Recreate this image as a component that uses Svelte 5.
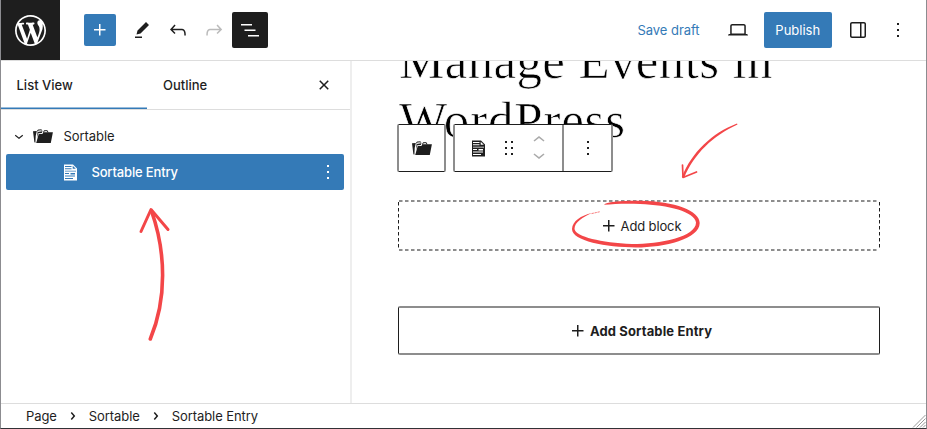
<script>
  const icons = {
    plus: 'M11 12.5V17.5H12.5V12.5H17.5V11H12.5V6H11V11H6V12.5H11Z',
    edit: 'm19 7-3-3-8.5 8.5-1 4 4-1L19 7Zm-7 11.5H5V20h7v-1.5Z',
    undo: 'M18.3 11.7c-.6-.6-1.4-.9-2.3-.9H6.7l2.9-3.3-1.1-1-4.5 5L8.5 16l1-1-2.7-2.7H16c.5 0 .9.2 1.3.5 1 1 1 3.4 1 4.5v.3h1.5v-.2c0-1.5 0-4.3-1.5-5.7z',
    redo: 'M15.6 6.5l-1.1 1 2.9 3.3H8c-.9 0-1.7.3-2.3.9-1.4 1.5-1.4 4.2-1.4 5.6v.2h1.5v-.3c0-1.1 0-3.5 1-4.5.3-.3.7-.5 1.3-.5h9.2L14.5 15l1.1 1.1 4.6-4.6-4.6-5z',
    list: 'M3 6h11v1.5H3V6Zm3.5 5.5h11V13h-11v-1.5ZM21 17H10v1.5h11V17Z',
    desktop: 'M20.5 16h-.7V8c0-1.1-.9-2-2-2H6.2c-1.1 0-2 .9-2 2v8h-.7c-.8 0-1.5.7-1.5 1.5h20c0-.8-.7-1.5-1.5-1.5zM5.7 8c0-.3.2-.5.5-.5h11.6c.3 0 .5.2.5.5v7.6H5.7V8z',
    drawer: 'M18 4H6c-1.1 0-2 .9-2 2v12c0 1.1.9 2 2 2h12c1.1 0 2-.9 2-2V6c0-1.1-.9-2-2-2zm-4 14.5H6c-.3 0-.5-.2-.5-.5V6c0-.3.2-.5.5-.5h8v13zm4.5-.5c0 .3-.2.5-.5.5h-2.5v-13H18c.3 0 .5.2.5.5v12z',
    more: 'M13 19h-2v-2h2v2zm0-6h-2v-2h2v2zm0-6h-2V5h2v2z',
    close: 'M12 13.06l3.712 3.713 1.061-1.06L13.061 12l3.712-3.712-1.06-1.06L12 10.938 8.288 7.227l-1.061 1.06L10.939 12l-3.712 3.712 1.06 1.061L12 13.061z',
    down: 'M17.5 11.6L12 16l-5.5-4.4.9-1.2L12 14l4.5-3.6 1 1.2z',
    up: 'M6.5 12.4L12 8l5.5 4.4-.9 1.2L12 10l-4.5 3.6-1-1.2z',
    right: 'M10.8622 8.04053L14.2805 12.0286L10.8622 16.0167L9.72327 15.0405L12.3049 12.0286L9.72327 9.01672L10.8622 8.04053Z',
    drag: 'M8 7h2V5H8v2zm0 6h2v-2H8v2zm0 6h2v-2H8v2zm6-14v2h2V5h-2zm0 8h2v-2h-2v2zm0 6h2v-2h-2v2z'
  };
  const crumbs = ['Page', 'Sortable', 'Sortable Entry'];
</script>

{#snippet icon(name, size = 24)}
  <svg width={size} height={size} viewBox="0 0 24 24" fill="currentColor"><path d={icons[name]} /></svg>
{/snippet}

{#snippet folder()}
  <svg width="20" height="15" viewBox="0 0 20 15" fill="currentColor">
    <path d="M0 2.300 3.800 1.900 2.700 7 2.400 13.800 1.400 13.200z" />
    <path d="M4.400 2.400 4.900 1.100 8.200 0.800 9.300 1.900M10.600 3.300 11.200 1.700H14.300L15 3.500" fill="none" stroke="currentColor" />
    <path d="M4.600 2.900 9.300 2.300 8.800 3.900 5.300 4.200 3.900 9z" />
    <path d="M5.700 5 9.500 4.900 10.100 3.300H19.900L17.800 14H3.200z" />
  </svg>
{/snippet}

{#snippet doc()}
  <svg width="13" height="17" viewBox="0 0 13 17" fill="currentColor">
    <path fill-rule="evenodd" d="M0 0.500h9l4 4v12H0zM1 2v.9h6.500V2zM1 4.300v.9h6.500v-.9zM8.700 1.700v3.100h3.100zM1 6.700v.9h11v-.9zM1 9.100v.9h4v-.9zM6.500 9.100v1.500H11V9.100zM1 11.500v.9h10v-.9zM1 14v.9h8V14z" />
  </svg>
{/snippet}

<div class="app">
  <header>
    <div class="logo">
      <svg width="31" height="31" viewBox="0 0 20 20" fill="#fff"><path d="M20 10c0-5.51-4.49-10-10-10C4.48 0 0 4.49 0 10c0 5.52 4.48 10 10 10 5.51 0 10-4.48 10-10zM7.78 15.37L4.37 6.22c.55-.02 1.17-.08 1.17-.08.5-.06.44-1.13-.06-1.11 0 0-1.45.11-2.37.11-.18 0-.37 0-.58-.01C4.12 2.69 6.87 1.11 10 1.11c2.33 0 4.45.87 6.05 2.34-.68-.11-1.65.39-1.65 1.58 0 .74.45 1.36.9 2.1.35.61.55 1.36.55 2.46 0 1.49-1.4 5-1.4 5l-3.03-8.37c.54-.02.82-.17.82-.17.5-.05.44-1.25-.06-1.22 0 0-1.44.12-2.38.12-.87 0-2.33-.12-2.33-.12-.5-.03-.56 1.2-.06 1.22l.92.08 1.26 3.41zM17.41 10c.24-.64.74-1.87.43-4.25.7 1.29 1.05 2.71 1.05 4.25 0 3.29-1.73 6.24-4.4 7.78.97-2.59 1.94-5.2 2.92-7.78zM6.1 18.09C3.12 16.65 1.11 13.53 1.11 10c0-1.3.23-2.48.72-3.59C3.25 10.3 4.67 14.2 6.1 18.09zm4.03-6.63l2.58 6.98c-.86.29-1.76.45-2.71.45-.79 0-1.57-.11-2.29-.33.81-2.38 1.62-4.74 2.42-7.1z" /></svg>
    </div>
    <button class="add">{@render icon('plus')}</button>
    <button class="tool">{@render icon('edit')}</button>
    <button class="tool">{@render icon('undo')}</button>
    <button class="tool off">{@render icon('redo')}</button>
    <button class="tool active">{@render icon('list')}</button>
    <div class="grow"></div>
    <button class="save">Save draft</button>
    <button class="tool">{@render icon('desktop')}</button>
    <button class="publish">Publish</button>
    <button class="tool">{@render icon('drawer')}</button>
    <button class="tool last">{@render icon('more')}</button>
  </header>

  <main>
    <aside>
      <div class="tabs">
        <div class="tab current">List View</div>
        <div class="tab">Outline</div>
        <button class="close">{@render icon('close')}</button>
      </div>
      <div class="tree">
        <div class="row parent">
          <span class="chev">{@render icon('down', 18)}</span>
          {@render folder()}
          <span class="label">Sortable</span>
        </div>
        <div class="row selected">
          {@render doc()}
          <span class="label">Sortable Entry</span>
          <span class="dots">{@render icon('more')}</span>
        </div>
      </div>
    </aside>

    <section class="canvas">
      <h1><span class="l1">Manage Events in</span><br /><span class="l2">WordPress</span></h1>
      <div class="toolbar">
        <div class="box one">{@render folder()}</div>
        <div class="box two">
          <div class="group">
            {@render doc()}
            <span class="grip">{@render icon('drag')}</span>
            <span class="movers">{@render icon('up')}{@render icon('down')}</span>
          </div>
          <div class="options">{@render icon('more')}</div>
        </div>
      </div>
      <div class="appender">
        <svg class="frame" width="482" height="51">
          <path d="M1 1H481M1 50H481" stroke="#8d8d8d" stroke-width="2" />
          <path d="M.5 2V50M481.500 2V50" stroke="#1e1e1e" />
        </svg>
        {@render icon('plus')}<span>Add block</span>
      </div>
      <button class="entry">{@render icon('plus')}<span>Add Sortable Entry</span></button>
    </section>
  </main>

  <footer>
    {#each crumbs as crumb, i}
      {#if i}<span class="sep">{@render icon('right')}</span>{/if}
      <span>{crumb}</span>
    {/each}
    <svg class="resize" width="14" height="14" viewBox="0 0 14 14"><path d="M1 13.500 13.500 1M4.500 13.500 13.500 4.500M8 13.500l5.500-5.500M11 13.500l2.500-2.500" /></svg>
  </footer>

  <svg class="marks" width="927" height="429" viewBox="0 0 927 429">
    <path d="M150.300 339C167 299 166 252 151.500 211" stroke-width="3.600" />
    <path d="M141 231.500 151 209.500 168 229.500" stroke-width="3" />
    <path class="solid" d="M737 123.500C712 133 692 152 681.800 177L684 178C694 154 713 135.500 737.500 124.500z" />
    <path d="M682.500 165 683 177.500 696.500 172" stroke-width="1.700" />
    <path class="solid" d="M604 204.700C606 202 620 200.700 640 200.800C675 201.200 699.700 211 699.700 223C699.500 239 665 247.500 636 247.500C606 247.200 572 241 572 229C572.500 221 581 215.500 592 213C583 217 574.500 222 574.500 229C576 237 601 242.500 632 244C660 244 696 237 696 222.500C695 211.500 668 205 640 203.900C625 203.300 614 203.900 604 204.700z" />
    <path d="M592 213.500l8-1.800" stroke-width=".7" stroke-dasharray="1.500 1.500" />
  </svg>
</div>

<style>
  :global(body) { margin: 0; }
  .app {
    position: relative; box-sizing: border-box; width: 927px; height: 429px; overflow: hidden;
    display: flex; flex-direction: column; background: #fff; color: #1e1e1e;
    font: 400 13px/16px Inter, "Liberation Sans", sans-serif;
    border-left: 1px solid #8c8c90; border-right: 1px solid #8c8c90; border-bottom: 1px solid #323236;
  }
  svg { display: block; flex: none; }
  button { border: 0; padding: 0; background: none; color: inherit; font: inherit; display: flex; align-items: center; justify-content: center; flex: none; }
  header { height: 60px; flex: none; border-bottom: 1px solid #ddd; display: flex; align-items: center; }
  .logo { width: 60.400px; height: 60px; margin-left: -1px; background: #1e1e1e; display: flex; align-items: center; justify-content: center; flex: none; }
  .add { width: 32px; height: 32px; margin: 0 8px 0 24px; background: #347ab7; color: #fff; border-radius: 2px; }
  .tool { width: 36px; height: 36px; }
  .off { color: #bbb; }
  .active { background: #1e1e1e; color: #fff; border-radius: 2px; }
  .grow { flex: 1; }
  .save { color: #347ab7; margin-right: 20px; letter-spacing: -.05px; }
  .publish { width: 68.500px; height: 36px; margin: 0 8px; background: #347ab7; color: #fff; border-radius: 2px; }
  .last { margin: 0 10px 0 4px; }

  main { flex: 1; min-height: 0; display: flex; }
  aside { width: 349px; flex: none; border-right: 2px solid #eee; }
  .tabs { height: 48px; border-bottom: 1px solid #ddd; display: flex; }
  .tab { width: 115px; padding-left: 16px; display: flex; align-items: center; font-weight: 500; }
  .tab.current { width: 130.500px; padding-left: 15.500px; box-shadow: inset 0 -1.500px #347ab7; }
  .close { margin: 0 14px 0 auto; width: 24px; }
  .tree { padding: 8px 6px 0 5.400px; }
  .row { height: 36px; display: flex; align-items: center; box-sizing: border-box; }
  .parent { padding-left: 4px; }
  .chev { margin-right: 5px; }
  .parent .label { margin-left: 10px; letter-spacing: -.05px; }
  .selected { background: #347ab7; color: #fff; border-radius: 2px; padding-left: 58px; font-weight: 500; }
  .selected .label { margin-left: 14px; flex: 1; letter-spacing: -.15px; }
  .dots { margin-right: 4px; }

  .canvas { position: relative; flex: 1; overflow: hidden; padding: 0 46px; }
  h1 { margin: -29px 0 0 1px; font: 400 51px/59px "Liberation Serif", serif; color: #000; white-space: nowrap; -webkit-text-stroke: 0.700px #fff; }
  .l1 { letter-spacing: .350px; }
  .l2 { letter-spacing: .800px; }
  .toolbar { position: absolute; left: 45px; top: 63px; display: flex; gap: 7px; }
  .box { box-sizing: border-box; height: 48px; border: solid #8d8d8d; border-width: 1px 2px; border-top-color: #1e1e1e; border-bottom-color: #1e1e1e; border-radius: 2px; background: #fff; display: flex; align-items: center; }
  .one { width: 49px; justify-content: center; }
  .two { width: 160px; }
  .group { display: flex; align-items: center; width: 107px; padding-left: 17px; box-sizing: border-box; }
  .grip { margin-left: 12px; }
  .movers { color: #aaa; margin-left: 6px; display: flex; flex-direction: column; }
  .movers svg:first-child { margin-top: -1px; }
  .movers svg:last-child { margin-top: -9px; }
  .options { flex: 1; align-self: stretch; border-left: 2px solid #8d8d8d; display: flex; align-items: center; justify-content: center; }
  .appender { position: relative; width: 482px; height: 51px; margin-top: 50px; display: flex; align-items: center; justify-content: center; }
  .appender span { letter-spacing: -.13px; }
  .frame { position: absolute; inset: 0; fill: none; stroke-dasharray: 3.500 2.500; }
  .entry { box-sizing: border-box; width: 482px; height: 49px; margin-top: 55px; border: solid #1e1e1e; border-width: 2px 1px; border-top-color: #8d8d8d; border-bottom-color: #8d8d8d; border-radius: 2px; font-weight: 700; letter-spacing: .13px; }

  footer { height: 24px; flex: none; border-top: 1px solid #ddd; padding: 0 0 0 25px; display: flex; align-items: center; position: relative; letter-spacing: -.08px; }
  .sep { margin: 0 4px; }
  .resize { margin-left: auto; align-self: flex-end; stroke: #999; stroke-width: 1; fill: none; }
  .marks { position: absolute; left: -1px; top: 0; fill: none; stroke: #f34648; stroke-linecap: round; stroke-linejoin: round; pointer-events: none; }
  .solid { fill: #f34648; stroke: none; }
</style>
